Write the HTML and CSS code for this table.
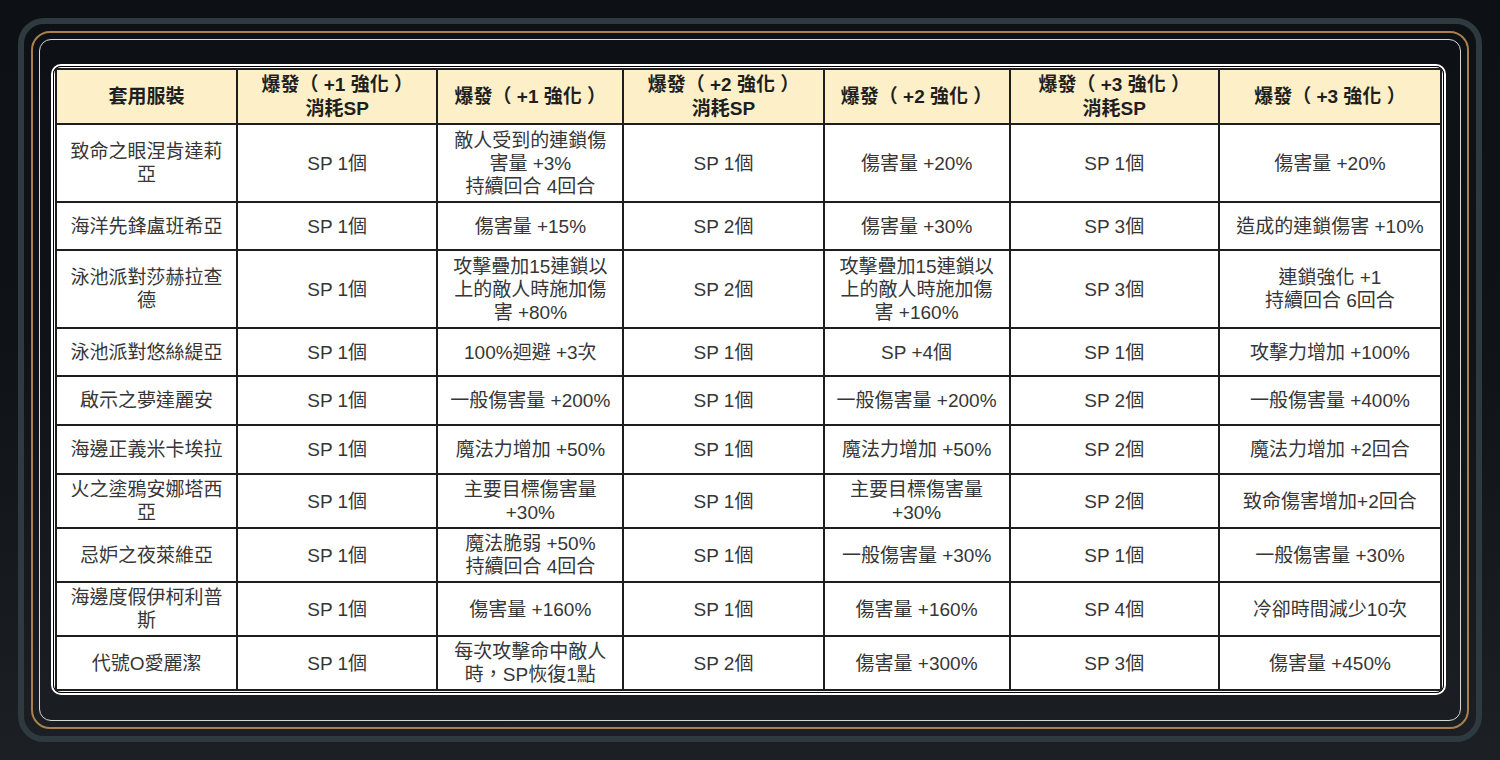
FILE: index.html
```html
<!DOCTYPE html>
<html lang="zh-Hant">
<head>
<meta charset="utf-8">
<title>爆發強化</title>
<link rel="stylesheet" href="styles.css">
</head>
<body>
<div class="frame">
  <div class="gold">
    <div class="inner">
      <div class="wrap-outer">
        <div class="wrap-inner">
          <table class="costume">
            <colgroup>
              <col class="c1"><col class="c2"><col class="c3"><col class="c4"><col class="c5"><col class="c6"><col class="c7">
            </colgroup>
            <thead>
              <tr class="h">
                <th>套用服裝</th>
                <th>爆發（ +1 強化 ）<br>消耗SP</th>
                <th>爆發（ +1 強化 ）</th>
                <th>爆發（ +2 強化 ）<br>消耗SP</th>
                <th>爆發（ +2 強化 ）</th>
                <th>爆發（ +3 強化 ）<br>消耗SP</th>
                <th>爆發（ +3 強化 ）</th>
              </tr>
            </thead>
            <tbody>
              <tr class="r78">
                <td>致命之眼涅肯達莉<br>亞</td><td>SP 1個</td><td>敵人受到的連鎖傷<br>害量 +3%<br>持續回合 4回合</td><td>SP 1個</td><td>傷害量 +20%</td><td>SP 1個</td><td>傷害量 +20%</td>
              </tr>
              <tr class="r48">
                <td>海洋先鋒盧班希亞</td><td>SP 1個</td><td>傷害量 +15%</td><td>SP 2個</td><td>傷害量 +30%</td><td>SP 3個</td><td>造成的連鎖傷害 +10%</td>
              </tr>
              <tr class="r78">
                <td>泳池派對莎赫拉查<br>德</td><td>SP 1個</td><td>攻擊疊加15連鎖以<br>上的敵人時施加傷<br>害 +80%</td><td>SP 2個</td><td>攻擊疊加15連鎖以<br>上的敵人時施加傷<br>害 +160%</td><td>SP 3個</td><td>連鎖強化 +1<br>持續回合 6回合</td>
              </tr>
              <tr class="r48">
                <td>泳池派對悠絲緹亞</td><td>SP 1個</td><td>100%迴避 +3次</td><td>SP 1個</td><td>SP +4個</td><td>SP 1個</td><td>攻擊力增加 +100%</td>
              </tr>
              <tr class="r49">
                <td>啟示之夢達麗安</td><td>SP 1個</td><td>一般傷害量 +200%</td><td>SP 1個</td><td>一般傷害量 +200%</td><td>SP 2個</td><td>一般傷害量 +400%</td>
              </tr>
              <tr class="r49">
                <td>海邊正義米卡埃拉</td><td>SP 1個</td><td>魔法力增加 +50%</td><td>SP 1個</td><td>魔法力增加 +50%</td><td>SP 2個</td><td>魔法力增加 +2回合</td>
              </tr>
              <tr class="r54">
                <td>火之塗鴉安娜塔西<br>亞</td><td>SP 1個</td><td>主要目標傷害量<br>+30%</td><td>SP 1個</td><td>主要目標傷害量<br>+30%</td><td>SP 2個</td><td>致命傷害增加+2回合</td>
              </tr>
              <tr class="r54">
                <td>忌妒之夜萊維亞</td><td>SP 1個</td><td>魔法脆弱 +50%<br>持續回合 4回合</td><td>SP 1個</td><td>一般傷害量 +30%</td><td>SP 1個</td><td>一般傷害量 +30%</td>
              </tr>
              <tr class="r54">
                <td>海邊度假伊柯利普<br>斯</td><td>SP 1個</td><td>傷害量 +160%</td><td>SP 1個</td><td>傷害量 +160%</td><td>SP 4個</td><td>冷卻時間減少10次</td>
              </tr>
              <tr class="r54">
                <td>代號O愛麗潔</td><td>SP 1個</td><td>每次攻擊命中敵人<br>時，SP恢復1點</td><td>SP 2個</td><td>傷害量 +300%</td><td>SP 3個</td><td>傷害量 +450%</td>
              </tr>
            </tbody>
          </table>
        </div>
      </div>
    </div>
  </div>
</div>
</body>
</html>
```

FILE: styles.css
```css
* { box-sizing: border-box; }
html, body { margin: 0; padding: 0; }
body {
  width: 1500px;
  height: 760px;
  padding: 18px;
  background: linear-gradient(180deg, #0d1116 0%, #0f1317 45%, #1c2024 100%);
  font-family: "Liberation Sans", "Noto Sans CJK TC", sans-serif;
  overflow: hidden;
}
.frame {
  width: 1464px;
  height: 724px;
  border: 6px solid #2f3940;
  border-radius: 26px;
  padding: 7px;
}
.gold {
  height: 100%;
  border: 2px solid #a8814c;
  border-radius: 19px;
  padding: 6px;
}
.inner {
  height: 100%;
  border: 1px solid #d9d9d6;
  border-radius: 12px;
  padding: 24px 14px 0 11px;
}
.wrap-outer {
  border: 2px solid #ffffff;
  border-radius: 10px;
}
.wrap-inner {
  border: 1px solid #000;
  border-radius: 8px;
  background: #fff;
  padding: 1px;
}
.costume {
  width: 100%;
  border-collapse: collapse;
  table-layout: fixed;
  border: 2px solid #1e1e1e;
}
.c1 { width: 181px; }
.c2 { width: 200px; }
.c3 { width: 186px; }
.c4 { width: 200px; }
.c5 { width: 186px; }
.c6 { width: 209px; }
.c7 { width: 222px; }
.costume th,
.costume td {
  border: 2px solid #1e1e1e;
  text-align: center;
  vertical-align: middle;
  padding: 0 4px;
  white-space: nowrap;
  font-size: 19px;
}
.costume th {
  background: #fdf0c9;
  color: #1f1f1f;
  font-weight: bold;
  line-height: 24px;
}
.costume td {
  color: #363636;
  line-height: 23px;
}
.h { height: 55px; }
.r78 { height: 78px; }
.r48 { height: 48px; }
.r49 { height: 49px; }
.r54 { height: 54px; }
```
